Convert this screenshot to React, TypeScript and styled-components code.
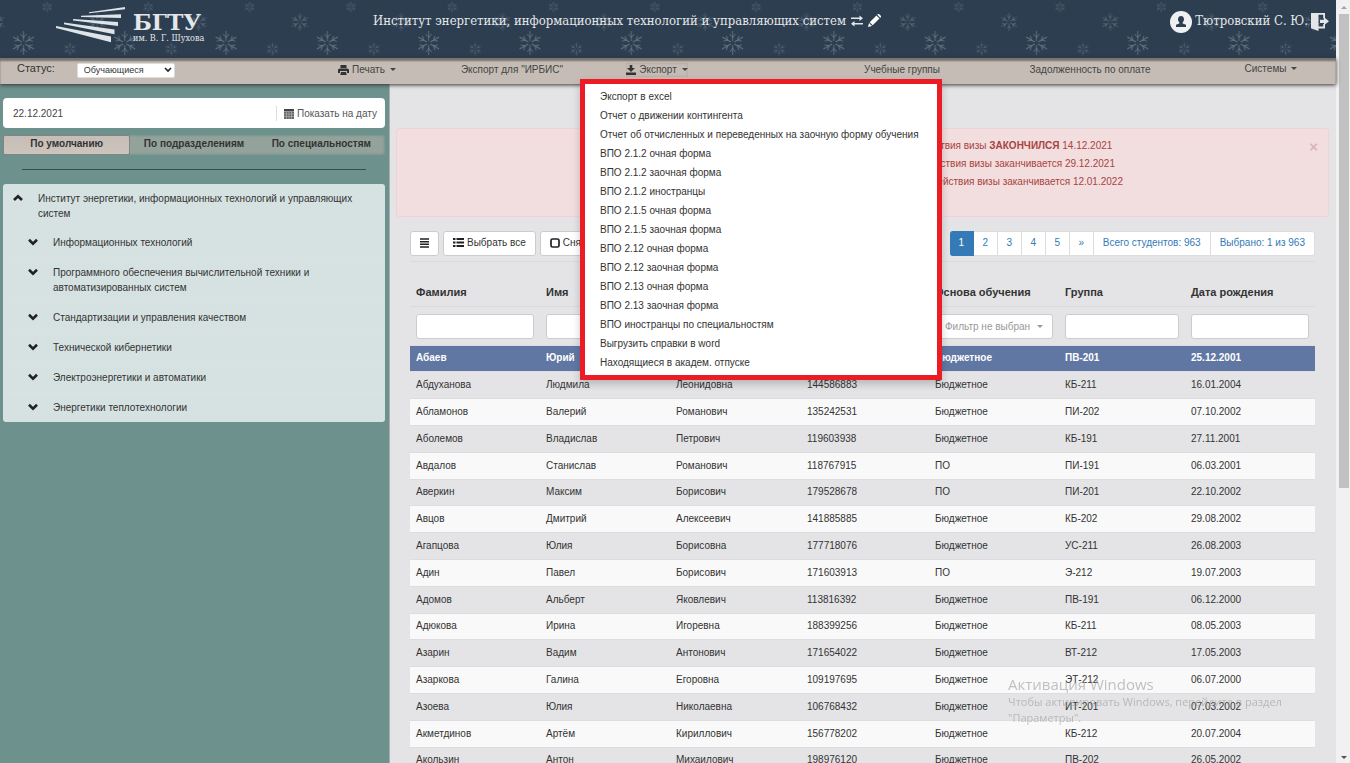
import React from 'react';
import styled, { createGlobalStyle, css } from 'styled-components';

const sans = '"Liberation Sans", Arial, sans-serif';
const serif = '"DejaVu Serif Condensed", "DejaVu Serif", serif';

const GlobalStyle = createGlobalStyle`
  * { box-sizing: border-box; }
  html, body, #root { height: 100%; }
  body {
    margin: 0;
    overflow: hidden;
    background: #e4e4e6;
    color: #333;
    font: 10px/15px ${sans};
  }
  button, input, select { font: inherit; color: inherit; margin: 0; }
  button { cursor: pointer; }
  a { color: inherit; text-decoration: none; }
`;

const Window = styled.div`
  display: grid;
  grid-template-columns: minmax(0, 1fr) 14px;
  height: 100vh;
  overflow: hidden;
`;

const Page = styled.div`
  display: flex;
  flex-direction: column;
  min-height: 0;
`;

const Header = styled.header`
  position: relative;
  display: flex;
  justify-content: space-between;
  flex: none;
  height: 58px;
  padding: 6px 7px 0 56px;
  background: #2d3e50;
  color: #e4e7ea;
  font-family: ${serif};
`;

const Snow = styled.svg`
  position: absolute;
  inset: 0;
  width: 100%;
  height: 100%;
`;

const Logo = styled.a`
  position: relative;
  display: flex;
  align-items: flex-start;
  gap: 8px;
  flex: 317 0 0;
`;

const LogoText = styled.span`
  display: flex;
  flex-direction: column;
  padding-top: 4px;
`;

const LogoName = styled.strong`
  font-family: "DejaVu Serif", serif;
  font-size: 22px;
  line-height: 24px;
`;

const LogoSub = styled.span`
  font-size: 9px;
  line-height: 9px;
  white-space: nowrap;
`;

const Title = styled.div`
  position: relative;
  display: flex;
  align-items: center;
  gap: 5px;
  height: 29px;
  font-size: 13px;
`;

const User = styled.div`
  position: relative;
  display: flex;
  align-items: center;
  justify-content: flex-end;
  gap: 3px;
  flex: 448 0 0;
  height: 31px;
  font-size: 13px;
`;

const UserName = styled.span`
  padding-bottom: 3px;
`;

const IconButton = styled.button`
  display: inline-flex;
  padding: 0;
  border: 0;
  background: none;
`;

const Toolbar = styled.nav`
  position: relative;
  z-index: 2;
  display: grid;
  grid-template-columns: 294fr 146fr 144fr 146fr 100fr 144fr 232fr 130fr;
  flex: none;
  height: 26px;
  background: #c5bdb5;
  box-shadow: inset 0 3px 2px #777270, 0 1px 4px #333;
`;

const ToolCell = styled.div<{ $column?: number; $raised?: boolean }>`
  position: relative;
  display: flex;
  align-items: center;
  justify-content: center;
  grid-column: ${(p) => p.$column};
  min-width: 0;
  padding-bottom: ${(p) => (p.$raised ? 5 : 3)}px;
`;

const StatusCell = styled.div`
  display: flex;
  align-items: center;
  gap: 22px;
  padding: 0 0 2px 17px;
`;

const StatusLabel = styled.label`
  padding-bottom: 4px;
  font-size: 11px;
`;

const ToolButton = styled.button<{ $active?: boolean }>`
  display: flex;
  align-items: center;
  gap: 3px;
  padding: 0;
  border: 0;
  background: none;
  color: #444;
  line-height: 14px;
  white-space: nowrap;
  ${(p) => p.$active && css`box-shadow: inset 0 0 3px #aaa19a;`}
`;

const ToolLink = styled.a`
  color: #444;
  white-space: nowrap;
`;

const Caret = styled.span`
  width: 0;
  margin-left: 2px;
  border: solid transparent;
  border-width: 3px 3px 0;
  border-top-color: currentColor;
`;

const SelectBox = styled.span`
  position: relative;
  display: flex;
  align-items: center;
`;

const StatusSelect = styled.select`
  appearance: none;
  width: 98px;
  height: 15px;
  padding: 0 6px;
  border: 1px solid #ddd;
  border-radius: 2px;
  background: #fff;
  font-size: 9px;
  line-height: 13px;
`;

const SelectArrow = styled.svg`
  position: absolute;
  right: 3px;
  pointer-events: none;
`;

const Menu = styled.ul`
  position: absolute;
  top: calc(100% - 5px);
  left: -4px;
  z-index: 3;
  width: 362px;
  margin: 0;
  padding: 3px 0;
  border: 5px solid #ed1c24;
  background: #fff;
  list-style: none;
  box-shadow: 0 4px 8px #0003;
`;

const MenuLink = styled.a`
  display: block;
  padding: 0 15px;
  line-height: 19px;
  white-space: nowrap;
`;

const Body = styled.div`
  display: grid;
  grid-template-columns: 390px minmax(0, 1fr);
  flex: 1;
  min-height: 0;
`;

const Sidebar = styled.aside`
  padding: 14px 4px 0 3px;
  border-right: 1px solid #aaaeb0;
  background: #6d918d;
`;

const DateBox = styled.div`
  display: flex;
  align-items: center;
  height: 30px;
  padding: 0 8px 0 10px;
  border-radius: 4px;
  background: #fff;
`;

const DateInput = styled.input`
  flex: 1;
  min-width: 0;
  padding: 0;
  border: 0;
  background: none;
  color: #444;
`;

const DateButton = styled.button`
  display: flex;
  align-items: center;
  gap: 3px;
  padding: 0 0 0 7px;
  border: 0;
  border-left: 1px solid #ddd;
  background: none;
  color: #555;
`;

const Tabs = styled.div`
  display: grid;
  grid-template-columns: repeat(3, 1fr);
  height: 20px;
  margin-top: 7px;
  border-radius: 2px;
  background: #93a39b;
  box-shadow: inset 0 0 3px #66857f;
`;

const Tab = styled.button<{ $active?: boolean }>`
  padding: 0 0 2px;
  border: 1px solid transparent;
  border-radius: 2px;
  background: none;
  font-weight: bold;
  line-height: 16px;
  white-space: nowrap;
  ${(p) =>
    p.$active &&
    css`
      border-color: #80857f;
      background: linear-gradient(#c5bdb6, #cdc4bd);
    `}
`;

const Rule = styled.hr`
  height: 1px;
  margin: 14px 19px;
  border: 0;
  background: #33524f;
`;

const Tree = styled.ul`
  margin: 0;
  padding: 0;
  border-radius: 3px;
  background: #d6e2e1;
  list-style: none;
`;

const TreeItem = styled.li<{ $child?: boolean }>`
  display: flex;
  align-items: flex-start;
  gap: 15px;
  padding: 7px 20px 7px ${(p) => (p.$child ? 25 : 10)}px;
  border-bottom: ${(p) => (p.$child ? '1px solid #dbe3e1' : 0)};
  &:last-child { border-bottom: 0; }
`;

const TreeToggle = styled.button`
  display: flex;
  flex: none;
  padding: 3px 0 0;
  border: 0;
  background: none;
`;

const Main = styled.main`
  min-width: 0;
  padding: 44px 7px 0 6px;
  overflow: hidden;
`;

const Alert = styled.div`
  position: relative;
  height: 89px;
  padding: 8px 24px;
  border: 1px solid #eed3d7;
  border-radius: 3px;
  background: #f2dede;
  color: #a94442;
  line-height: 18px;
  text-align: center;
`;

const AlertLine = styled.p<{ $indent: number }>`
  margin: 0;
  padding-left: ${(p) => p.$indent}px;
`;

const AlertClose = styled.button`
  position: absolute;
  top: 9px;
  right: 10px;
  padding: 0;
  border: 0;
  background: none;
  color: #dcb5b5;
  font-size: 15px;
  font-weight: bold;
`;

const Records = styled.section`
  padding: 14px 14px 0;
`;

const RecordTools = styled.div`
  display: flex;
  justify-content: space-between;
  align-items: flex-start;
  height: 26px;
  margin-bottom: 4px;
`;

const ButtonRow = styled.div`
  display: flex;
  gap: 4px;
`;

const SquareButton = styled.button`
  display: flex;
  align-items: center;
  gap: 3px;
  height: 25px;
  padding: 0 9px 2px;
  border: 1px solid #ccc;
  border-radius: 3px;
  background: #fff;
  white-space: nowrap;
`;

const Pager = styled.div`
  display: flex;
  height: 25px;
`;

const PageLink = styled.a<{ $active?: boolean; $wide?: boolean }>`
  min-width: 24px;
  padding: 0 ${(p) => (p.$wide ? 9 : 0)}px;
  border: 1px solid #ddd;
  border-left-width: 0;
  background: #fff;
  color: #337ab7;
  line-height: 21px;
  text-align: center;
  white-space: nowrap;
  &:last-child { border-radius: 0 3px 3px 0; }
  ${(p) =>
    p.$active &&
    css`
      border-color: #337ab7;
      border-radius: 3px 0 0 3px;
      background: #337ab7;
      color: #fff;
    `}
`;

const Table = styled.table`
  width: 100%;
  border-collapse: separate;
  border-spacing: 0;
  border-top: 1px solid #dadadc;
  table-layout: fixed;
`;

const HeadCell = styled.th`
  height: 45px;
  padding: 16px 6px 0;
  border-bottom: 1px solid #dadadc;
  font-size: 11px;
  text-align: left;
  white-space: nowrap;
`;

const FilterCell = styled.td`
  height: 38px;
  padding: 0 6px;
`;

const FilterInput = styled.input`
  display: block;
  width: 100%;
  height: 25px;
  padding: 0 6px;
  border: 1px solid #ccc;
  border-radius: 3px;
  background: #fff;
`;

const FilterButton = styled.button`
  display: flex;
  align-items: center;
  justify-content: space-between;
  width: 100%;
  height: 25px;
  padding: 0 9px;
  border: 1px solid #ccc;
  border-radius: 3px;
  background: #fff;
  color: #999;
  white-space: nowrap;
`;

const Row = styled.tr<{ $selected?: boolean }>`
  &:nth-child(odd) { background: #f9f9f9; }
  &:nth-child(5n + 1) > td { height: 26px; }
  ${(p) =>
    p.$selected &&
    css`
      &&& {
        background: #6177a3;
        color: #fff;
        font-weight: bold;
      }
    `}
`;

const Cell = styled.td`
  height: 27px;
  padding: 0 6px 2px;
  border-top: 1px solid #dddddf;
`;

const ScrollTrack = styled.div`
  display: flex;
  flex-direction: column;
  align-items: center;
  gap: 5px;
  padding: 6px 0 4px 2px;
  background: #f1f1f1;
`;

const ScrollThumb = styled.div`
  width: 10px;
  height: 63%;
  background: #c1c1c1;
`;

const ScrollArrow = styled.span<{ $down?: boolean }>`
  border: solid transparent;
  border-width: ${(p) => (p.$down ? '3px 3px 0' : '0 3px 3px')};
  border-color: ${(p) => (p.$down ? '#505050 transparent' : 'transparent transparent #a3a3a3')};
  margin-top: ${(p) => (p.$down ? 'auto' : 0)};
`;

const Watermark = styled.div`
  position: fixed;
  right: 38px;
  bottom: 37px;
  z-index: 4;
  width: 304px;
  color: #9999;
  font: 11px/16px "Open Sans", sans-serif;
  pointer-events: none;
`;

const WatermarkTitle = styled.div`
  font-size: 15px;
  line-height: 20px;
`;

const Flake = ({ x, y, r, o }: { x: number; y: number; r: number; o: number }) => (
  <g transform={`translate(${x} ${y}) scale(${r / 12})`} stroke="#9fb0bd" strokeOpacity={o} strokeWidth="0.9" fill="none">
    {[0, 60, 120, 180, 240, 300].map((a) => (
      <path key={a} transform={`rotate(${a})`} d="M0 -2V-12M0 -5.500L-3 -9M0 -5.500L3 -9" />
    ))}
  </g>
);

const Snowfall = () => (
  <Snow aria-hidden="true">
    <defs>
      <pattern id="snow" width="101.3" height="58" patternUnits="userSpaceOnUse">
        <Flake x={23.5} y={43} r={12} o={0.45} />
        <Flake x={47} y={7} r={5.5} o={0.36} />
        <Flake x={70} y={49} r={6.5} o={0.36} />
        <Flake x={97.3} y={22} r={9} o={0.36} />
        <Flake x={-4} y={22} r={9} o={0.36} />
      </pattern>
    </defs>
    <rect width="100%" height="100%" fill="url(#snow)" />
  </Snow>
);

const LogoMark = () => (
  <svg width="69" height="38" viewBox="56 6 69 38" fill="#dfe4e8" aria-hidden="true">
    <path d="M89 12.300L125 7v2.300L89 13.300zM81 15.800L121 14.300v3.700L81 17zM73 19L118 22v4L73 20.600zM64 22.500L114.500 29.500v4.800L64 24.300zM56 26L111 36.500v5.800L56 28z" />
  </svg>
);

const Chevron = ({ up }: { up?: boolean }) => (
  <svg width="10" height="8" viewBox="0 0 10 8" fill="none" stroke="#222" strokeWidth="2.6" aria-hidden="true">
    <path d={up ? 'M1 6L5 2.200L9 6' : 'M1 1.800L5 5.600L9 1.800'} />
  </svg>
);

const menuItems = [
  'Экспорт в excel',
  'Отчет о движении контингента',
  'Отчет об отчисленных и переведенных на заочную форму обучения',
  'ВПО 2.1.2 очная форма',
  'ВПО 2.1.2 заочная форма',
  'ВПО 2.1.2 иностранцы',
  'ВПО 2.1.5 очная форма',
  'ВПО 2.1.5 заочная форма',
  'ВПО 2.12 очная форма',
  'ВПО 2.12 заочная форма',
  'ВПО 2.13 очная форма',
  'ВПО 2.13 заочная форма',
  'ВПО иностранцы по специальностям',
  'Выгрузить справки в word',
  'Находящиеся в академ. отпуске',
];

const departments = [
  'Информационных технологий',
  'Программного обеспечения вычислительной техники и автоматизированных систем',
  'Стандартизации и управления качеством',
  'Технической кибернетики',
  'Электроэнергетики и автоматики',
  'Энергетики теплотехнологии',
];

const columns = [
  { title: 'Фамилия', width: 130 },
  { title: 'Имя', width: 130 },
  { title: 'Отчество', width: 131 },
  { title: 'Номер', width: 128 },
  { title: 'Основа обучения', width: 130 },
  { title: 'Группа', width: 126 },
  { title: 'Дата рождения', width: 130 },
];
const totalWidth = columns.reduce((sum, c) => sum + c.width, 0);

const students = [
  ['Абаев', 'Юрий', '', '', 'Бюджетное', 'ПВ-201', '25.12.2001'],
  ['Абдуханова', 'Людмила', 'Леонидовна', '144586883', 'Бюджетное', 'КБ-211', '16.01.2004'],
  ['Абламонов', 'Валерий', 'Романович', '135242531', 'Бюджетное', 'ПИ-202', '07.10.2002'],
  ['Аболемов', 'Владислав', 'Петрович', '119603938', 'Бюджетное', 'КБ-191', '27.11.2001'],
  ['Авдалов', 'Станислав', 'Романович', '118767915', 'ПО', 'ПИ-191', '06.03.2001'],
  ['Аверкин', 'Максим', 'Борисович', '179528678', 'ПО', 'ПИ-201', '22.10.2002'],
  ['Авцов', 'Дмитрий', 'Алексеевич', '141885885', 'Бюджетное', 'КБ-202', '29.08.2002'],
  ['Агапцова', 'Юлия', 'Борисовна', '177718076', 'Бюджетное', 'УС-211', '26.08.2003'],
  ['Адин', 'Павел', 'Борисович', '171603913', 'ПО', 'Э-212', '19.07.2003'],
  ['Адомов', 'Альберт', 'Яковлевич', '113816392', 'Бюджетное', 'ПВ-191', '06.12.2000'],
  ['Адюкова', 'Ирина', 'Игоревна', '188399256', 'Бюджетное', 'КБ-211', '08.05.2003'],
  ['Азарин', 'Вадим', 'Антонович', '171654022', 'Бюджетное', 'ВТ-212', '17.05.2003'],
  ['Азаркова', 'Галина', 'Егоровна', '109197695', 'Бюджетное', 'ЭТ-212', '06.07.2000'],
  ['Азоева', 'Юлия', 'Николаевна', '106768432', 'Бюджетное', 'ИТ-201', '07.03.2002'],
  ['Акметдинов', 'Артём', 'Кириллович', '156778202', 'Бюджетное', 'КБ-212', '20.07.2004'],
  ['Акользин', 'Антон', 'Михаилович', '198976120', 'Бюджетное', 'ПВ-202', '26.05.2002'],
];

export default function App() {
  return (
    <>
      <GlobalStyle />
      <Window>
        <Page>
          <Header>
            <Snowfall />
            <Logo href="#">
              <LogoMark />
              <LogoText>
                <LogoName>БГТУ</LogoName>
                <LogoSub>им. В. Г. Шухова</LogoSub>
              </LogoText>
            </Logo>
            <Title>
              Институт энергетики, информационных технологий и управляющих систем
              <IconButton aria-label="Сменить институт">
                <svg width="12" height="12" viewBox="0 0 12 12" fill="#e4e7ea">
                  <path d="M0 2.500h8.500V.5L12 3.300 8.500 6V4H0zM12 8H3.500V6L0 8.700l3.500 2.800v-2H12z" />
                </svg>
              </IconButton>
              <IconButton aria-label="Редактировать">
                <svg width="13" height="13" viewBox="0 0 13 13" fill="#fff">
                  <path d="M0 13l1-4 3 3zM1.700 8.300L8.500 1.500l3 3-6.800 6.800zM9.300.7L10 0h1l2 2v1l-.7.7z" />
                </svg>
              </IconButton>
            </Title>
            <User>
              <svg width="22" height="22" viewBox="0 0 22 22" aria-hidden="true">
                <circle cx="11" cy="11" r="11" fill="#eef0f2" />
                <path d="M11 5c2 0 3 1.300 3 3.200 0 1.400-.6 2.300-1.300 3v1.200l3.300 1.400V16H6v-2.200l3.300-1.400v-1.200C8.600 10.500 8 9.600 8 8.200 8 6.300 9 5 11 5z" fill="#2d3e50" />
              </svg>
              <UserName>Тютровский С. Ю.</UserName>
              <IconButton aria-label="Выйти">
                <svg width="18" height="18" viewBox="0 0 18 18" fill="#e4e7ea">
                  <path d="M0 0h14v5.500h-1.800V1.800H7.500V13.500h4.700V11H14v4.500H7.500V18L0 15.300z" />
                  <path d="M9 6.700h4V4.300l5 4-5 4V10H9z" />
                </svg>
              </IconButton>
            </User>
          </Header>

          <Toolbar>
            <StatusCell>
              <StatusLabel htmlFor="status">Статус:</StatusLabel>
              <SelectBox>
                <StatusSelect id="status" defaultValue="Обучающиеся">
                  <option>Обучающиеся</option>
                </StatusSelect>
                <SelectArrow width="8" height="6" viewBox="0 0 8 6" fill="none" stroke="#222" strokeWidth="1.6">
                  <path d="M1 1l3 3 3-3" />
                </SelectArrow>
              </SelectBox>
            </StatusCell>
            <ToolCell>
              <ToolButton>
                <svg width="11" height="10" viewBox="0 0 11 10" fill="#333" aria-hidden="true">
                  <path d="M2.500 0h6v3h-6zM0 4.500L1.500 3.500h8L11 4.500V8H9V6H2v2H0zM3 7h5l.7 3H2.300z" />
                </svg>
                Печать
                <Caret />
              </ToolButton>
            </ToolCell>
            <ToolCell><ToolLink href="#">Экспорт для "ИРБИС"</ToolLink></ToolCell>
            <ToolCell>
              <ToolButton $active aria-expanded="true">
                <svg width="10" height="10" viewBox="0 0 10 10" fill="#333" aria-hidden="true">
                  <path d="M3.700 0h2.600v3H9L5 7 1 3h2.700zM0 7.500h10V10H0z" />
                </svg>
                Экспорт
                <Caret />
              </ToolButton>
              <Menu>
                {menuItems.map((item) => (
                  <li key={item}><MenuLink href="#">{item}</MenuLink></li>
                ))}
              </Menu>
            </ToolCell>
            <ToolCell $column={6}><ToolLink href="#">Учебные группы</ToolLink></ToolCell>
            <ToolCell><ToolLink href="#">Задолженность по оплате</ToolLink></ToolCell>
            <ToolCell $raised><ToolButton>Системы<Caret /></ToolButton></ToolCell>
          </Toolbar>

          <Body>
            <Sidebar>
              <DateBox>
                <DateInput aria-label="Дата" defaultValue="22.12.2021" />
                <DateButton>
                  <svg width="10" height="11" viewBox="0 0 10 11" aria-hidden="true">
                    <path d="M0 1h10v10H0z" fill="#666" />
                    <path d="M0 3.500h10M2.500 4v7M5 4v7M7.500 4v7M0 6h10M0 8.500h10" stroke="#bbb" strokeWidth=".6" />
                    <path d="M0 1h10v2H0z" fill="#444" />
                  </svg>
                  Показать на дату
                </DateButton>
              </DateBox>
              <Tabs>
                <Tab $active>По умолчанию</Tab>
                <Tab>По подразделениям</Tab>
                <Tab>По специальностям</Tab>
              </Tabs>
              <Rule />
              <Tree>
                <TreeItem>
                  <TreeToggle aria-label="Свернуть"><Chevron up /></TreeToggle>
                  Институт энергетики, информационных технологий и управляющих систем
                </TreeItem>
                {departments.map((name) => (
                  <TreeItem $child key={name}>
                    <TreeToggle aria-label="Развернуть"><Chevron /></TreeToggle>
                    {name}
                  </TreeItem>
                ))}
              </Tree>
            </Sidebar>

            <Main>
              <Alert role="alert">
                <AlertLine $indent={280}>Срок действия визы <b>ЗАКОНЧИЛСЯ</b> 14.12.2021</AlertLine>
                <AlertLine $indent={288}>Срок действия визы заканчивается 29.12.2021</AlertLine>
                <AlertLine $indent={304}>Срок действия визы заканчивается 12.01.2022</AlertLine>
                <AlertClose aria-label="Закрыть">×</AlertClose>
              </Alert>
              <Records>
                <RecordTools>
                  <ButtonRow>
                    <SquareButton aria-label="Меню">
                      <svg width="9" height="10" viewBox="0 0 9 10" stroke="#222" strokeWidth="1.5" aria-hidden="true">
                        <path d="M0 1h9M0 3.700h9M0 6.300h9M0 9h9" />
                      </svg>
                    </SquareButton>
                    <SquareButton>
                      <svg width="11" height="9" viewBox="0 0 11 9" fill="#222" aria-hidden="true">
                        <path d="M0 0h2.500v2H0zM3.500 0H11v2H3.500zM0 3.500h2.500v2H0zM3.500 3.500H11v2H3.500zM0 7h2.500v2H0zM3.500 7H11v2H3.500z" />
                      </svg>
                      Выбрать все
                    </SquareButton>
                    <SquareButton>
                      <svg width="10" height="10" viewBox="0 0 10 10" fill="none" stroke="#222" strokeWidth="1.700" aria-hidden="true">
                        <rect x="1" y="1" width="8" height="8" rx="1.500" />
                      </svg>
                      Снять все
                    </SquareButton>
                  </ButtonRow>
                  <Pager>
                    <PageLink href="#" $active>1</PageLink>
                    {['2', '3', '4', '5', '»'].map((p) => <PageLink href="#" key={p}>{p}</PageLink>)}
                    <PageLink href="#" $wide>Всего студентов: 963</PageLink>
                    <PageLink href="#" $wide>Выбрано: 1 из 963</PageLink>
                  </Pager>
                </RecordTools>
                <Table>
                  <colgroup>
                    {columns.map((c) => (
                      <col key={c.title} style={{ width: `${(c.width / totalWidth) * 100}%` }} />
                    ))}
                  </colgroup>
                  <thead>
                    <tr>{columns.map((c) => <HeadCell key={c.title}>{c.title}</HeadCell>)}</tr>
                    <tr>
                      {columns.map((c) => (
                        <FilterCell key={c.title}>
                          {c.title === 'Основа обучения' ? (
                            <FilterButton>Фильтр не выбран<Caret /></FilterButton>
                          ) : (
                            <FilterInput aria-label={c.title} />
                          )}
                        </FilterCell>
                      ))}
                    </tr>
                  </thead>
                  <tbody>
                    {students.map((s, i) => (
                      <Row key={s[0]} $selected={i === 0}>
                        {s.map((v, j) => <Cell key={j}>{v}</Cell>)}
                      </Row>
                    ))}
                  </tbody>
                </Table>
              </Records>
            </Main>
          </Body>
        </Page>
        <ScrollTrack aria-hidden="true">
          <ScrollArrow />
          <ScrollThumb />
          <ScrollArrow $down />
        </ScrollTrack>
      </Window>
      <Watermark>
        <WatermarkTitle>Активация Windows</WatermarkTitle>
        Чтобы активировать Windows, перейдите в раздел "Параметры".
      </Watermark>
    </>
  );
}
